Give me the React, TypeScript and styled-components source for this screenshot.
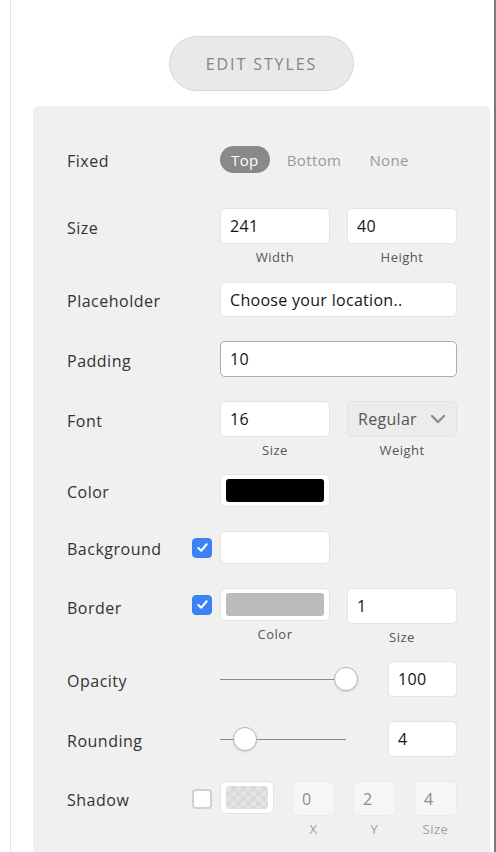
import React from "react";
import styled, { createGlobalStyle } from "styled-components";

const Global = createGlobalStyle`
  html, body { margin: 0; padding: 0; background: #fff; }
  body { font-family: "Open Sans", "Liberation Sans", sans-serif; overflow: hidden; }
  * { box-sizing: border-box; }
`;

const Page = styled.div`
  margin-left: 10px;
  width: 486px;
  min-height: 852px;
  border-left: 1px solid #e4e4e4;
  border-right: 2px solid #7a7a7a;
  padding: 36px 4px 0 22px;
  display: flex;
  flex-direction: column;
  align-items: center;
`;

const EditButton = styled.button`
  width: 185px;
  height: 55px;
  border-radius: 28px;
  background: #e9e9e9;
  border: 1px solid #d6d6d6;
  color: #858585;
  font-family: inherit;
  font-size: 16px;
  font-weight: 500;
  letter-spacing: 1.9px;
  padding: 0;
`;

const Panel = styled.div`
  margin-top: 15px;
  align-self: stretch;
  background: #f0f0f0;
  border-radius: 5px 5px 0 0;
  padding: 40px 33px 60px 34px;
  display: flex;
  flex-direction: column;
  min-height: 760px;
`;

const Row = styled.div<{ $mt?: number }>`
  display: grid;
  grid-template-columns: 125px 28px 237px;
  align-items: start;
  margin-top: ${(p) => (p.$mt ?? 24)}px;
  &:first-child { margin-top: 0; }
`;

const Label = styled.div<{ $h?: number }>`
  height: ${(p) => p.$h ?? 36}px;
  padding-top: 3px;
  display: flex;
  align-items: center;
  font-size: 16px;
  color: #333;
  letter-spacing: 0.5px;
`;

const CheckCell = styled.div<{ $h?: number }>`
  height: ${(p) => p.$h ?? 33}px;
  display: flex;
  align-items: center;
`;

const Controls = styled.div<{ $gap?: number }>`
  grid-column: 3;
  display: flex;
  align-items: flex-start;
  gap: ${(p) => p.$gap ?? 17}px;
`;

const Field = styled.div<{ $w?: number }>`
  width: ${(p) => (p.$w ? `${p.$w}px` : "auto")};
  flex: ${(p) => (p.$w ? "none" : "1")};
  display: flex;
  flex-direction: column;
  align-items: center;
`;

const Caption = styled.div<{ $faded?: boolean }>`
  margin-top: 5px;
  margin-bottom: -7px;
  line-height: 16px;
  font-size: 13px;
  letter-spacing: 0.5px;
  color: ${(p) => (p.$faded ? "#a0a0a0" : "#555")};
`;

const Input = styled.div<{ $focus?: boolean; $faded?: boolean; $h?: number }>`
  width: 100%;
  height: ${(p) => p.$h ?? 36}px;
  background: ${(p) => (p.$faded ? "#f6f6f6" : "#fff")};
  border: 1px solid ${(p) => (p.$focus ? "#ababab" : p.$faded ? "#ebebeb" : "#e4e4e4")};
  border-radius: 5px;
  padding: 0 9px;
  display: flex;
  align-items: center;
  font-size: 16px;
  color: ${(p) => (p.$faded ? "#8c8c8c" : "#151515")};
  letter-spacing: 0.3px;
`;

const Select = styled.div`
  width: 100%;
  height: 36px;
  background: #ececec;
  border: 1px solid #e2e2e2;
  border-radius: 5px;
  padding: 0 10px 0 10px;
  display: flex;
  align-items: center;
  justify-content: space-between;
  font-size: 16px;
  color: #555;
  letter-spacing: 0.3px;
`;

const Swatch = styled.div<{ $w?: number }>`
  width: ${(p) => p.$w ?? 110}px;
  height: 33px;
  background: #fff;
  border: 1px solid #e4e4e4;
  border-radius: 6px;
  padding: 4px 5px;
`;

const SwatchFill = styled.div<{ $color: string; $checker?: boolean }>`
  width: 100%;
  height: 100%;
  border-radius: 3px;
  background-color: ${(p) => p.$color};
  ${(p) =>
    p.$checker
      ? `background-image: linear-gradient(45deg, #d9d9d9 25%, transparent 25%, transparent 75%, #d9d9d9 75%), linear-gradient(45deg, #d9d9d9 25%, transparent 25%, transparent 75%, #d9d9d9 75%);
         background-size: 10px 10px; background-position: 0 0, 5px 5px;`
      : ""}
`;

const Segmented = styled.div`
  height: 27px;
  display: flex;
  align-items: center;
  gap: 6px;
`;

const Seg = styled.div<{ $active?: boolean }>`
  height: 27px;
  padding: 0 11px;
  border-radius: 14px;
  display: flex;
  align-items: center;
  font-size: 15px;
  letter-spacing: 0.4px;
  background: ${(p) => (p.$active ? "#898989" : "transparent")};
  color: ${(p) => (p.$active ? "#fff" : "#9a9a9a")};
`;

const Check = styled.div<{ $on?: boolean }>`
  width: 20px;
  height: 20px;
  border-radius: 4px;
  background: ${(p) => (p.$on ? "#3b82f6" : "#fff")};
  border: ${(p) => (p.$on ? "1px solid #3a7fe8" : "2px solid #d0d0d0")};
  display: flex;
  align-items: center;
  justify-content: center;
`;

const SliderWrap = styled.div`
  width: 126px;
  height: 36px;
  position: relative;
  display: flex;
  align-items: center;
  margin-right: 42px;
`;

const Track = styled.div`
  width: 100%;
  height: 1px;
  background: #8a8a8a;
`;

const Thumb = styled.div`
  position: absolute;
  top: 6px;
  width: 24px;
  height: 24px;
  margin-left: -12px;
  border-radius: 50%;
  background: #fff;
  border: 1px solid #b5b5b5;
  box-shadow: 0 1px 2px rgba(0, 0, 0, 0.12);
`;

const CheckIcon = () => (
  <svg width="13" height="13" viewBox="0 0 14 14">
    <path d="M2.5 7.5 L5.6 10.5 L11.5 3.5" fill="none" stroke="#fff" strokeWidth="2.2" strokeLinecap="round" strokeLinejoin="round" />
  </svg>
);

const Chevron = () => (
  <svg width="16" height="10" viewBox="0 0 16 10">
    <path d="M2 2 L8 8 L14 2" fill="none" stroke="#8d8d8d" strokeWidth="2.4" strokeLinecap="round" strokeLinejoin="round" />
  </svg>
);

const Slider = ({ pct }: { pct: number }) => (
  <SliderWrap>
    <Track />
    <Thumb style={{ left: `${pct}%` }} />
  </SliderWrap>
);

export default function App() {
  return (
    <>
      <Global />
      <Page>
        <EditButton>EDIT STYLES</EditButton>
        <Panel>
          <Row>
            <Label $h={27}>Fixed</Label>
            <Controls $gap={0}>
              <Segmented>
                <Seg $active>Top</Seg>
                <Seg>Bottom</Seg>
                <Seg>None</Seg>
              </Segmented>
            </Controls>
          </Row>

          <Row $mt={35}>
            <Label>Size</Label>
            <Controls>
              <Field>
                <Input>241</Input>
                <Caption>Width</Caption>
              </Field>
              <Field>
                <Input>40</Input>
                <Caption>Height</Caption>
              </Field>
            </Controls>
          </Row>

          <Row>
            <Label $h={35}>Placeholder</Label>
            <Controls>
              <Input $h={35}>Choose your location..</Input>
            </Controls>
          </Row>

          <Row>
            <Label>Padding</Label>
            <Controls>
              <Input $focus>10</Input>
            </Controls>
          </Row>

          <Row>
            <Label>Font</Label>
            <Controls>
              <Field>
                <Input>16</Input>
                <Caption>Size</Caption>
              </Field>
              <Field>
                <Select>
                  <span>Regular</span>
                  <Chevron />
                </Select>
                <Caption>Weight</Caption>
              </Field>
            </Controls>
          </Row>

          <Row $mt={23}>
            <Label $h={33}>Color</Label>
            <Controls>
              <Swatch>
                <SwatchFill $color="#000" />
              </Swatch>
            </Controls>
          </Row>

          <Row>
            <Label $h={33}>Background</Label>
            <CheckCell>
              <Check $on>
                <CheckIcon />
              </Check>
            </CheckCell>
            <Controls>
              <Swatch>
                <SwatchFill $color="#fff" />
              </Swatch>
            </Controls>
          </Row>

          <Row>
            <Label $h={36}>Border</Label>
            <CheckCell>
              <Check $on>
                <CheckIcon />
              </Check>
            </CheckCell>
            <Controls>
              <Field $w={110}>
                <Swatch>
                  <SwatchFill $color="#bbbbbb" />
                </Swatch>
                <Caption>Color</Caption>
              </Field>
              <Field>
                <Input>1</Input>
                <Caption>Size</Caption>
              </Field>
            </Controls>
          </Row>

          <Row $mt={23}>
            <Label>Opacity</Label>
            <Controls $gap={0}>
              <Slider pct={100} />
              <Field>
                <Input>100</Input>
              </Field>
            </Controls>
          </Row>

          <Row>
            <Label>Rounding</Label>
            <Controls $gap={0}>
              <Slider pct={20} />
              <Field>
                <Input>4</Input>
              </Field>
            </Controls>
          </Row>

          <Row>
            <Label $h={35}>Shadow</Label>
            <CheckCell $h={35}>
              <Check />
            </CheckCell>
            <Controls $gap={18}>
              <Swatch $w={55}>
                <SwatchFill $color="#e4e4e4" $checker />
              </Swatch>
              <Field $w={43}>
                <Input $faded $h={35}>0</Input>
                <Caption $faded>X</Caption>
              </Field>
              <Field $w={43}>
                <Input $faded $h={35}>2</Input>
                <Caption $faded>Y</Caption>
              </Field>
              <Field $w={43}>
                <Input $faded $h={35}>4</Input>
                <Caption $faded>Size</Caption>
              </Field>
            </Controls>
          </Row>
        </Panel>
      </Page>
    </>
  );
}
